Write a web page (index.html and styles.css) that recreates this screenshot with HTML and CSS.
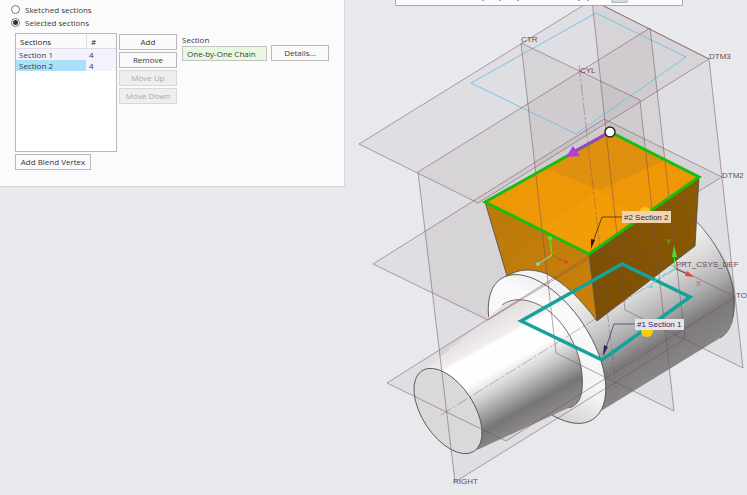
FILE: index.html
```html
<!DOCTYPE html>
<html lang="en">
<head>
    <meta charset="utf-8">
    <meta name="viewport" content="width=device-width, initial-scale=1.0">
    <title>Blend Sections</title>
    <link rel="stylesheet" href="styles.css">
</head>
<body>
    <main class="workspace">
        <form class="panel">
            <label class="option"><input type="radio" name="mode" value="sketched"> Sketched sections</label>
            <label class="option"><input type="radio" name="mode" value="selected" checked> Selected sections</label>

            <div class="columns">
                <div class="list">
                    <div class="table-box">
                        <table>
                            <thead>
                                <tr><th>Sections</th><th class="count">#</th></tr>
                            </thead>
                            <tbody>
                                <tr><td>Section 1</td><td class="count">4</td></tr>
                                <tr><td class="selected">Section 2</td><td class="count">4</td></tr>
                            </tbody>
                        </table>
                    </div>
                    <button type="button" class="vertex">Add Blend Vertex</button>
                </div>

                <div class="actions">
                    <button type="button">Add</button>
                    <button type="button">Remove</button>
                    <button type="button" disabled>Move Up</button>
                    <button type="button" disabled>Move Down</button>
                </div>

                <div class="section">
                    <label for="chain">Section</label>
                    <div class="chain-row">
                        <input type="text" id="chain" value="One-by-One Chain">
                        <button type="button">Details...</button>
                    </div>
                </div>
            </div>
        </form>

        <div class="viewport">
            <svg class="model" viewBox="345 0 402 495" role="img" aria-label="Blend model">
                <defs>
                    <linearGradient id="shaft" gradientUnits="userSpaceOnUse" x1="470" y1="332" x2="524" y2="429">
                        <stop offset="0" stop-color="#e4dfe0"/>
                        <stop offset="0.16" stop-color="#f1eded"/>
                        <stop offset="0.2" stop-color="#ffffff"/>
                        <stop offset="0.42" stop-color="#fdfdfd"/>
                        <stop offset="0.6" stop-color="#c8c8c8"/>
                        <stop offset="0.84" stop-color="#777575"/>
                        <stop offset="1" stop-color="#8b8989"/>
                    </linearGradient>
                    <linearGradient id="body" gradientUnits="userSpaceOnUse" x1="582" y1="240" x2="662" y2="374">
                        <stop offset="0" stop-color="#f4f2f2"/>
                        <stop offset="0.3" stop-color="#f0f0f0"/>
                        <stop offset="0.48" stop-color="#dadada"/>
                        <stop offset="0.66" stop-color="#b0b0b0"/>
                        <stop offset="0.82" stop-color="#7b7979"/>
                        <stop offset="1" stop-color="#878585"/>
                    </linearGradient>
                    <linearGradient id="flange" gradientUnits="userSpaceOnUse" x1="500" y1="280" x2="590" y2="420">
                        <stop offset="0" stop-color="#e3dfdf"/>
                        <stop offset="0.25" stop-color="#fafafa"/>
                        <stop offset="0.65" stop-color="#f2f2f2"/>
                        <stop offset="0.82" stop-color="#dad8d8"/>
                        <stop offset="1" stop-color="#b4b3b3"/>
                    </linearGradient>
                    <linearGradient id="front" gradientUnits="userSpaceOnUse" x1="495" y1="230" x2="590" y2="310">
                        <stop offset="0" stop-color="#bd7a0b"/>
                        <stop offset="1" stop-color="#c98009"/>
                    </linearGradient>
                    <linearGradient id="side" gradientUnits="userSpaceOnUse" x1="590" y1="280" x2="698" y2="210">
                        <stop offset="0" stop-color="#7c4f04"/>
                        <stop offset="1" stop-color="#8a5904"/>
                    </linearGradient>
                </defs>

                <!-- datum plane fills -->
                <g class="plane-fill">
                    <path d="M359 144 592 0 709 59 478 203Z"/>
                    <path d="M373 264 604 119 722 177 488 320Z"/>
                    <path d="M387 383 617 238 735 297 506 441Z"/>
                    <path d="M418 172 650 28 685 339 455 482Z"/>
                    <path d="M521 43 640 100 674 411 556 353Z"/>
                    <path d="M592 0 709 59 743 368 625 310Z"/>
                </g>

                <path class="sketch" d="M471 83 596 13 686 57 576 134Z"/>

                <!-- revolved body -->
                <path fill="url(#body)" d="M510 276 640 198C670 192 700 217 722 254C740 286 739 325 720 338L596 414Z"/>
                <path class="edge" d="M697 222C715 241 729 266 733 289C736 312 733 331 720 338"/>
                <ellipse class="edge" fill="url(#flange)" cx="547" cy="349" rx="84" ry="44" transform="rotate(57 547 349)"/>
                <path fill="url(#shaft)" d="M427 368 503 305C515 297 533 299 549 311C571 329 585 361 582 390C581 400 576 406 566 409L477 450 447 411Z"/>
                <path class="edge" d="M502 305C514 296 533 299 549 311C571 329 585 361 582 390C581 400 576 406 569 408"/>
                <ellipse class="edge" fill="#dad9da" cx="448" cy="411" rx="48" ry="26" transform="rotate(57 448 411)"/>

                <!-- blend block -->
                <path fill="url(#front)" d="M485 202 589 254 597 321C580 298 564 283 547 274C532 268 518 269 507 276Z"/>
                <path fill="url(#side)" d="M589 254 699 177 695 246 597 321Z"/>
                <path fill="#ee9808" d="M485 202 610 132 699 177 589 254Z"/>
                <path fill="#df900f" d="M545 168 610 132 665 160 600 190Z"/>
                <path fill="#f29d08" d="M540 229 598 191 640 217 589 254Z"/>
                <path class="edge" d="M485 202 507 276C518 269 532 268 547 274C564 283 580 298 597 321L695 246 699 177M589 254 597 321"/>

                <!-- datum plane outlines -->
                <g class="plane-line">
                    <path d="M359 144 592 0 709 59 478 203Z"/>
                    <path d="M373 264 604 119 722 177 488 320Z"/>
                    <path d="M387 383 617 238 735 297 506 441Z"/>
                    <path d="M418 172 650 28 685 339 455 482Z"/>
                    <path d="M521 43 640 100 674 411 556 353Z"/>
                    <path d="M592 0 709 59 743 368 625 310Z"/>
                    <path class="axis" d="M579 65 616 388M441 415 687 262"/>
                </g>

                <path class="section-two" d="M485 202 610 132 699 177 589 254Z"/>
                <path class="section-one" d="M521 321 622 264 690 297 602 360Z"/>

                <!-- start point and direction -->
                <path class="direction" d="M610 132 575 151"/>
                <path fill="#b43ddb" d="M566 157 573 146 580 156Z"/>
                <circle cx="610" cy="132" r="5" fill="#ffffff" stroke="#222222" stroke-width="1.4"/>

                <!-- spin centre -->
                <g fill="none" stroke-width="1.3">
                    <path stroke="#58df30" d="M550 238 552 255"/>
                    <path stroke="#7fd9ac" d="M552 255 538 264"/>
                    <path stroke="#b3661b" d="M552 255 566 262"/>
                </g>
                <circle cx="550" cy="238" r="2" fill="#5be334"/>
                <circle cx="538" cy="264" r="2" fill="#7fd9ac"/>
                <circle cx="566" cy="262" r="2" fill="#f04030"/>

                <!-- default coordinate system -->
                <path stroke="#45ddd8" stroke-dasharray="7 2" d="M675 268 654 281"/>
                <path fill="#5fdcd8" d="M648 288 652 284 653 288Z"/>
                <path stroke="#3fe03f" d="M675 268 674 253"/>
                <path fill="#3fe03f" d="M674 245 677 257 672 257Z"/>
                <path stroke="#5a4545" d="M676 269 687 274"/>
                <path fill="#f04038" d="M694 277 685 276 687 271Z"/>

                <g class="datum-text">
                    <text x="521" y="42">CTR</text>
                    <text x="580" y="73">CYL</text>
                    <text x="709" y="59">DTM3</text>
                    <text x="722" y="178">DTM2</text>
                    <text x="676" y="267">PRT_CSYS_DEF</text>
                    <text x="736" y="298">TO</text>
                    <text x="453" y="484">RIGHT</text>
                    <text class="axis-y" x="666" y="244">Y</text>
                    <text class="axis-x" x="696" y="286">X</text>
                </g>

                <!-- section callouts -->
                <circle cx="645" cy="213" r="6" fill="#ffc51c"/>
                <circle cx="647" cy="331" r="6" fill="#ffcd08"/>
                <path class="leader" stroke="#47250b" d="M622 217H602L592 245"/>
                <path fill="#36131b" d="M591 249 591 239 595 240Z"/>
                <path class="leader" stroke="#493a72" d="M635 324H614L605 351"/>
                <path fill="#30205c" d="M603 356 604 345 608 347Z"/>
                <rect x="622" y="211" width="49" height="12" fill="#f2d4ac"/>
                <rect x="635" y="319" width="49" height="11" fill="#e7e4e9"/>
                <g class="callout-text">
                    <text x="624" y="220">#2 Section 2</text>
                    <text x="637" y="327">#1 Section 1</text>
                </g>

                <!-- lower edge of the view toolbar -->
                <path fill="#fbfbfc" stroke="#a8a9ad" d="M395.500 -2V5.500H682.500V-2Z"/>
                <path fill="#d9dadd" stroke="#b2b3b7" d="M612 -2V2.500H627V-2Z"/>
                <path stroke="#55565a" d="M483 0V1M500 0V1M518 0V1M579 0V1M588 0V1"/>
            </svg>
        </div>
    </main>
</body>
</html>
```
FILE: styles.css
```css
* {
    box-sizing: border-box;
}
body {
    margin: 0;
    background-color: #e8e9ed;
    color: #38383c;
    font-family: "Open Sans", "Noto Sans", sans-serif;
    font-size: 8px;
    line-height: 12px;
}
.workspace {
    display: grid;
    grid-template-columns: 345px 1fr;
    align-items: start;
    overflow: hidden;
}
.panel {
    padding: 3px 17px 16px 15px;
    background: #fbfbfb;
    border-right: 1px solid #d3d6de;
    border-bottom: 1px solid #d3d6de;
}
.option {
    display: flex;
    align-items: center;
    gap: 5px;
    height: 13px;
    margin-left: -4px;
}
.option input {
    appearance: none;
    width: 9px;
    height: 9px;
    margin: 0;
    border: 1px solid #77777b;
    border-radius: 50%;
    background: #ffffff;
}
.option input:checked {
    background: radial-gradient(circle, #333333 0 2px, #ffffff 3px);
}
.columns {
    display: flex;
    align-items: flex-start;
    margin-top: 4px;
}
.list {
    flex: 0 0 102px;
}
.table-box {
    height: 119px;
    margin-bottom: 2px;
    background: #ffffff;
    border: 1px solid #b9b9bc;
}
table {
    width: 100%;
    border-spacing: 0;
    table-layout: fixed;
}
th,
td {
    height: 11px;
    padding: 0 3px;
    line-height: 11px;
    text-align: left;
    font-weight: normal;
}
th {
    height: 15px;
    padding-left: 4px;
    background: #fafafa;
    border-bottom: 1px solid #dedee1;
    color: #1e1e20;
}
td {
    background: #f5f1fd;
}
.count {
    width: 30px;
}
th.count {
    border-left: 1px solid #dedee1;
}
td.selected {
    background: #a9e1fb;
}
button {
    height: 16px;
    padding: 0;
    background: #fafafa;
    border: 1px solid #b9b9bc;
    color: inherit;
    font: inherit;
}
button:disabled {
    background: #eeeeef;
    border-color: #d8d8da;
    color: #aaaaad;
}
.vertex {
    width: 76px;
}
.actions {
    display: flex;
    flex-direction: column;
    flex: 0 0 58px;
    gap: 2px;
    margin: 1px 5px 0 2px;
}
.section {
    margin-top: 1px;
}
.section label {
    display: block;
    height: 11px;
}
.chain-row {
    display: flex;
    align-items: center;
    gap: 4px;
}
.chain-row input {
    width: 85px;
    height: 15px;
    padding: 0 4px;
    background: #e8f9df;
    border: 1px solid #c2c4c2;
    color: inherit;
    font: inherit;
}
.chain-row button {
    width: 58px;
}
.viewport {
    min-width: 0;
}
.model {
    display: block;
    width: 100%;
}
.plane-fill {
    fill: #85696a;
    fill-opacity: 0.08;
}
.plane-line {
    fill: none;
    stroke: #765058;
    stroke-opacity: 0.65;
    stroke-width: 0.8;
}
.axis {
    stroke-dasharray: 12 2 3 2;
    stroke-opacity: 0.5;
}
.sketch {
    fill: none;
    stroke: #70bfe6;
    stroke-width: 0.9;
}
.edge {
    stroke: #4c4948;
    stroke-width: 0.8;
}
path.edge {
    fill: none;
}
.section-two {
    fill: none;
    stroke: #18bd10;
    stroke-width: 3;
}
.section-one {
    fill: none;
    stroke: #14a39b;
    stroke-width: 3.5;
}
.direction {
    stroke: #a43fc4;
    stroke-width: 3;
}
.leader {
    fill: none;
    stroke-width: 0.8;
}
.datum-text,
.callout-text {
    fill: #6c4a51;
    font-family: "Liberation Sans", sans-serif;
    font-size: 8px;
}
.callout-text {
    fill: #35245e;
}
.datum-text .axis-y {
    fill: #38d238;
}
.datum-text .axis-x {
    fill: #ee4848;
}
```
